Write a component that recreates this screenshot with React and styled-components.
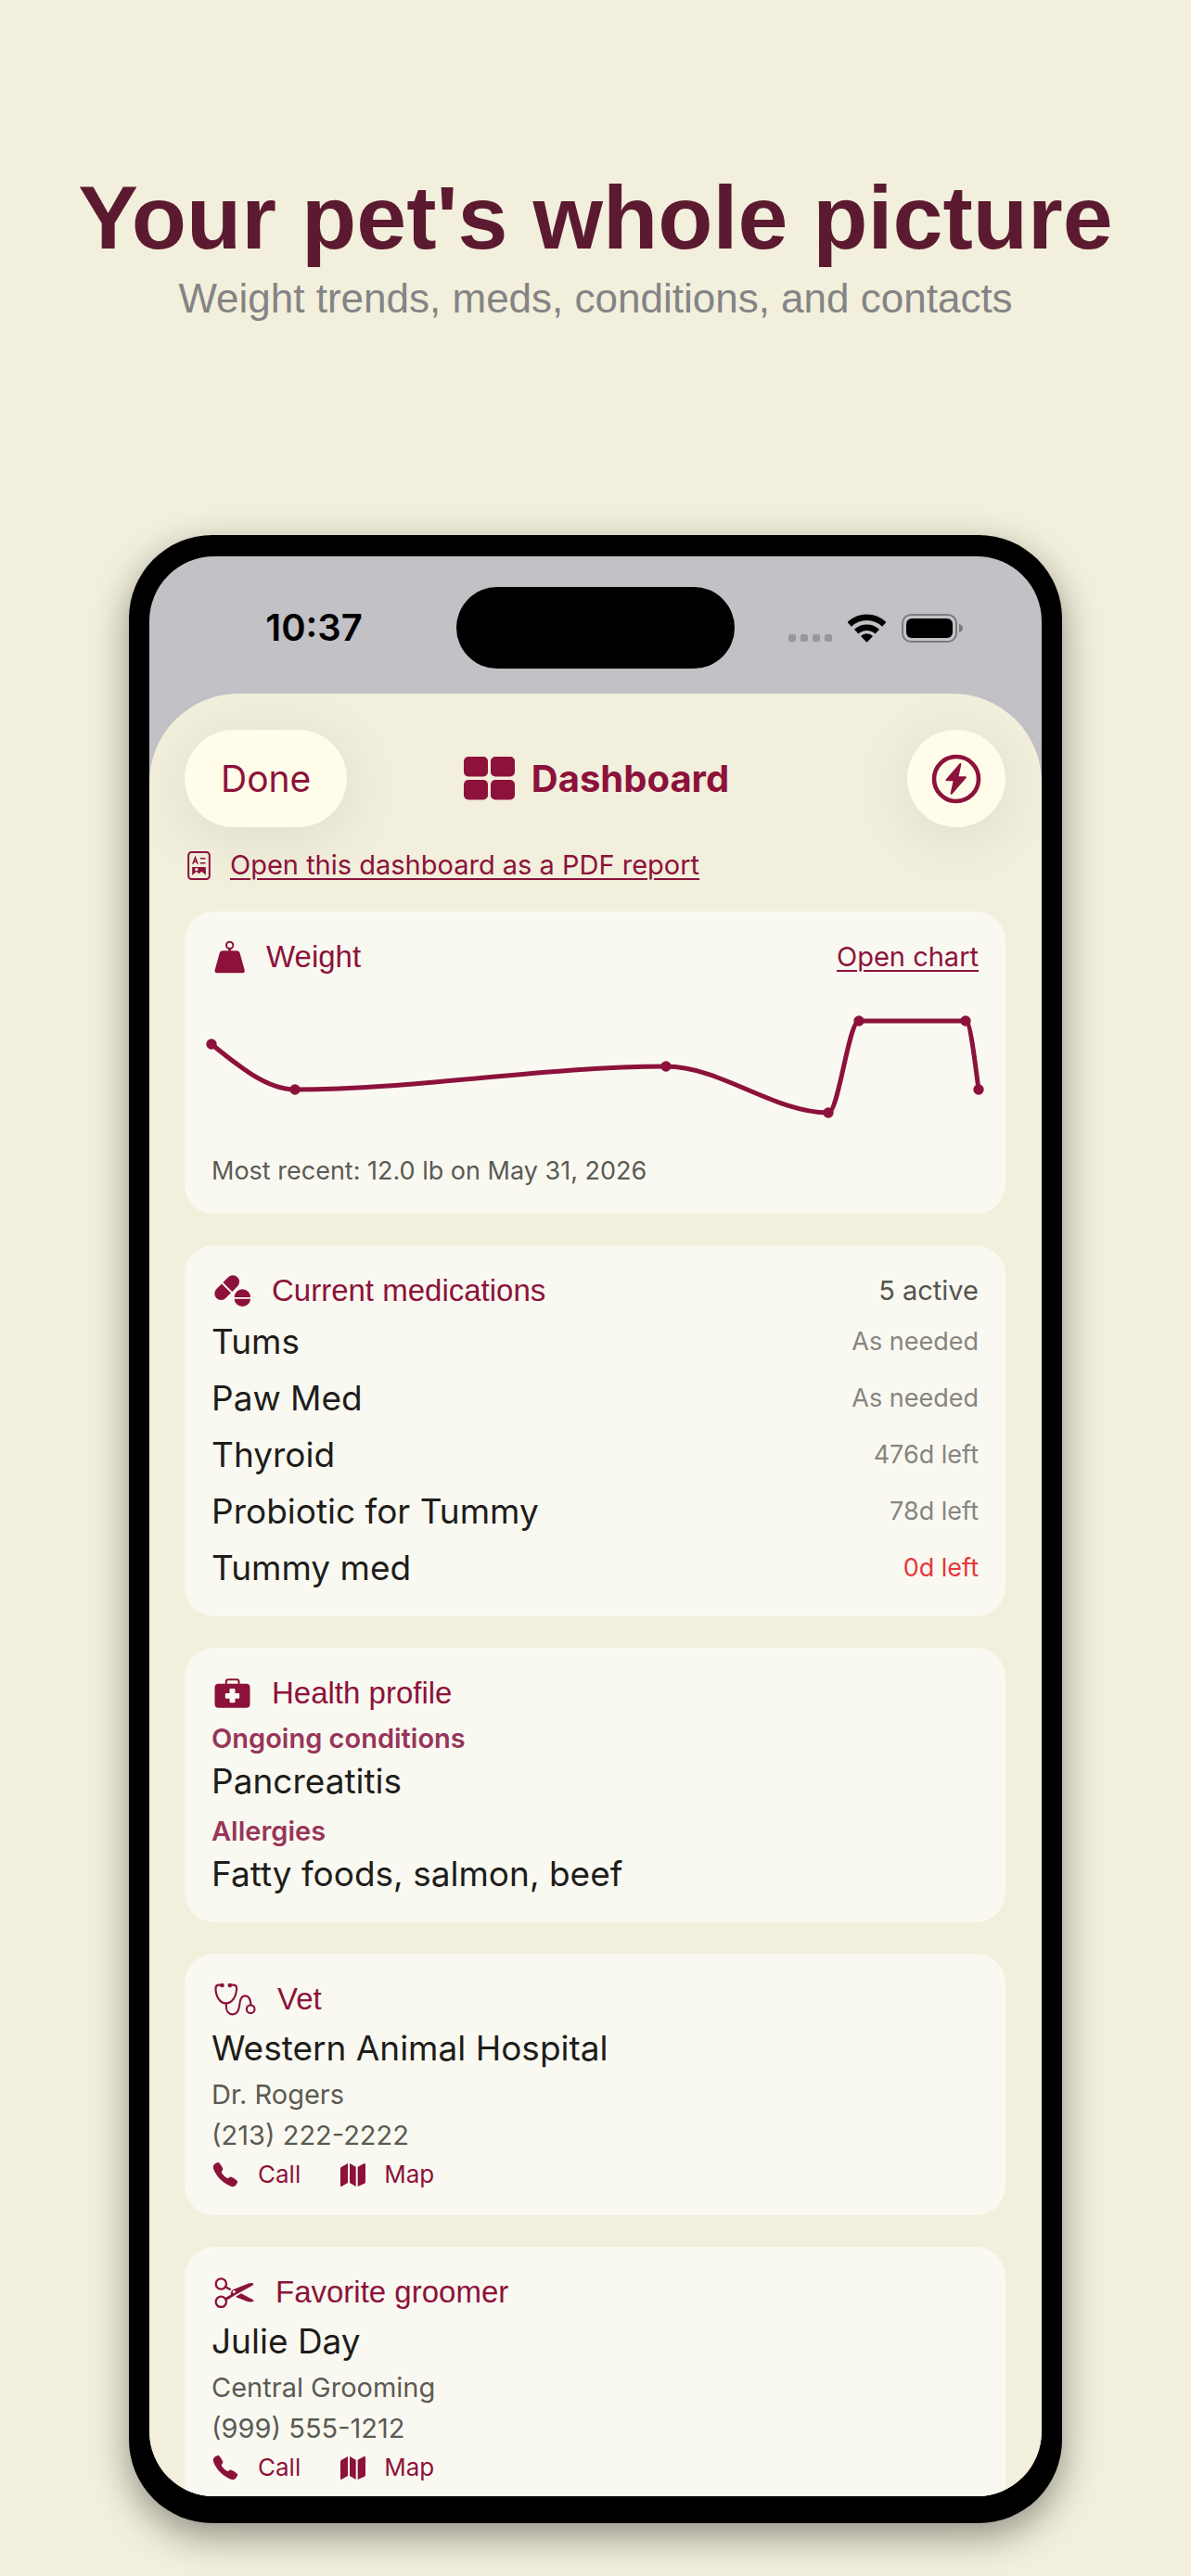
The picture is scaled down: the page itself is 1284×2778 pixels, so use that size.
import React from 'react'
import styled, { createGlobalStyle } from 'styled-components'
import { IoCall } from 'react-icons/io5'

const GlobalStyle = createGlobalStyle`
*{
    box-sizing: border-box;
}
body{
    margin: 0;
    background: #F2EFDC;
    font-family: Inter, "Liberation Sans", sans-serif;
}
h1, h2, h3, p, ul{
    margin: 0;
    padding: 0;
}
svg{
    display: block;
    flex: none;
}
`
const Page = styled.main`
display: flex;
min-height: 100vh;
padding: 180px 0px 57px;
flex-direction: column;
align-items: center;
`
const Headline = styled.h1`
color: #5C1A30;
text-align: center;
font-family: "Liberation Sans", Arial, sans-serif;
font-size: 97px;
font-weight: 700;
line-height: 110px;
`
const Tagline = styled.p`
margin-top: 6px;
color: #848484;
text-align: center;
font-family: "Liberation Sans", Arial, sans-serif;
font-size: 44px;
line-height: 52px;
`
const Phone = styled.div`
width: min(1006px, 92%);
margin-top: 229px;
padding: 23px 22px 29px;
border-radius: 90px;
background: #000;
box-shadow: 0 14px 40px rgba(0, 0, 0, 0.4);
`
const Screen = styled.div`
overflow: hidden;
border-radius: 70px;
background: #C2C1C6;
`
const StatusBar = styled.div`
display: grid;
grid-template-columns: 1fr 300px 1fr;
align-items: center;
height: 148px;
padding-top: 6px;
`
const Time = styled.time`
justify-self: center;
padding-left: 24px;
color: #000;
font-size: 40px;
font-weight: 600;
line-height: 48px;
`
const Island = styled.div`
height: 88px;
border-radius: 44px;
background: #000;
`
const Signals = styled.div`
display: flex;
padding-left: 58px;
align-items: center;
gap: 17px;
`
const Sheet = styled.section`
display: flex;
padding: 39px 39px 0px 38px;
flex-direction: column;
border-radius: 96px 96px 0px 0px;
background: #F2EFDC;
`
const Header = styled.header`
display: grid;
grid-template-columns: 1fr auto 1fr;
align-items: center;
margin-bottom: 23px;
`
const HeaderButton = styled.button`
display: flex;
height: 105px;
padding: 0px ${(props) => (props.$round ? '26px' : '39px')};
justify-content: center;
align-items: center;
justify-self: ${(props) => (props.$round ? 'end' : 'start')};
border: none;
border-radius: 53px;
background: #FFFCE9;
box-shadow: 0 10px 70px rgba(0, 0, 0, 0.09);
color: #8C123B;
font-family: inherit;
font-size: 39px;
cursor: pointer;
`
const ScreenTitle = styled.h2`
display: flex;
padding-left: 3px;
align-items: center;
gap: 18px;
color: #8C123B;
font-size: 40px;
font-weight: 700;
line-height: 48px;
`
const ReportRow = styled.div`
display: flex;
padding-left: 3px;
align-items: center;
gap: 21px;
margin-bottom: 32px;
color: #8C123B;
`
const TextLink = styled.a`
color: #8C123B;
font-size: 29px;
line-height: 36px;
text-decoration: underline;
text-decoration-thickness: 2px;
text-underline-offset: 4px;
`
const Cards = styled.div`
display: flex;
flex-direction: column;
gap: 34px;
`
const Card = styled.article`
display: flex;
padding: 28px 29px ${(props) => (props.$cut ? '15px' : '28px')};
flex-direction: column;
gap: ${(props) => props.$gap || '10px'};
border-radius: ${(props) => (props.$cut ? '32px 32px 0px 0px' : '32px')};
background: #FAF9F1;
`
const CardHead = styled.div`
display: flex;
justify-content: space-between;
align-items: center;
`
const CardTitle = styled.h3`
display: flex;
padding-left: 3px;
align-items: center;
gap: 23px;
color: #8C123B;
font-family: "Liberation Sans", Arial, sans-serif;
font-size: 33px;
font-weight: 400;
line-height: 42px;
`
const Count = styled.span`
color: #55544F;
font-size: 29px;
line-height: 36px;
`
const Chart = styled.svg`
width: 100%;
height: auto;
overflow: visible;
`
const Caption = styled.p`
color: #5B5A55;
font-size: 27px;
line-height: 36px;
`
const MedList = styled.ul`
display: flex;
flex-direction: column;
gap: 13px;
list-style: none;
`
const MedRow = styled.li`
display: flex;
justify-content: space-between;
align-items: center;
`
const Body = styled.p`
color: #1E1D1B;
font-size: 37px;
line-height: 48px;
`
const Supply = styled.span`
color: ${(props) => (props.$low ? '#E5383B' : '#868580')};
font-size: 27px;
line-height: 32px;
`
const Conditions = styled.div`
display: flex;
flex-direction: column;
gap: 12px;
`
const Condition = styled.div`
display: flex;
flex-direction: column;
gap: 4px;
`
const Label = styled.p`
color: #97355A;
font-size: 29px;
font-weight: 600;
line-height: 36px;
`
const Detail = styled.p`
color: #5B5A55;
font-size: 29px;
line-height: 36px;
`
const Actions = styled.div`
display: flex;
gap: 43px;
`
const Action = styled.a`
display: flex;
align-items: center;
gap: 20px;
color: #8C123B;
font-size: 26px;
line-height: 32px;
text-decoration: none;
`

const weights = [
  [0, 63],
  [90, 112],
  [490, 87],
  [665, 137],
  [698, 38],
  [813, 38],
  [827, 112],
]

// monotone cubic through the points, flat wherever the trend turns
const linePath = (pts) => {
  const slopes = pts.slice(1).map((p, i) => (p[1] - pts[i][1]) / (p[0] - pts[i][0]))
  const last = slopes.length - 1
  const tangent = (i) => {
    if (i === 0) return slopes[0] * 1.5
    if (i > last) return slopes[last] * 1.5
    return slopes[i - 1] * slopes[i] <= 0 ? 0 : (slopes[i - 1] + slopes[i]) / 2
  }
  return pts.slice(1).reduce((d, p, i) => {
    const [x, y] = pts[i]
    const dx = (p[0] - x) / 3
    return `${d} C${x + dx} ${y + dx * tangent(i)} ${p[0] - dx} ${p[1] - dx * tangent(i + 1)} ${p[0]} ${p[1]}`
  }, `M${pts[0][0]} ${pts[0][1]}`)
}

const meds = [
  { name: 'Tums', left: 'As needed' },
  { name: 'Paw Med', left: 'As needed' },
  { name: 'Thyroid', left: '476d left' },
  { name: 'Probiotic for Tummy', left: '78d left' },
  { name: 'Tummy med', left: '0d left', low: true },
]

const DotsIcon = () => (
  <svg width="47" height="31" viewBox="0 0 47 31" fill="#97969B" aria-hidden="true">
    <rect x="0" y="22" width="8" height="8" rx="2" />
    <rect x="13" y="22" width="8" height="8" rx="2" />
    <rect x="26" y="22" width="8" height="8" rx="2" />
    <rect x="39" y="22" width="8" height="8" rx="2" />
  </svg>
)
const WifiIcon = () => (
  <svg width="41" height="31" viewBox="0 0 41 31" fill="none" stroke="#000" strokeWidth="6.5" aria-hidden="true">
    <path d="M1.7 11.3 A27 27 0 0 1 39.3 11.3" />
    <path d="M9.2 19.2 A16.5 16.5 0 0 1 31.8 19.2" />
    <path d="M20.5 30.8 L13.9 24 A9.5 9.5 0 0 1 27.1 24 Z" fill="#000" stroke="none" />
  </svg>
)
const BatteryIcon = () => (
  <svg width="66" height="31" viewBox="0 0 66 31" aria-hidden="true">
    <rect x="1" y="1" width="58" height="29" rx="9" fill="none" stroke="#7B7A7F" strokeWidth="2" />
    <rect x="5" y="5" width="50" height="21" rx="6" fill="#000" />
    <path d="M62 11 q4 1 4 4.5 q0 3.5 -4 4.5z" fill="#7B7A7F" />
  </svg>
)
const GridIcon = () => (
  <svg width="55" height="47" viewBox="0 0 55 47" fill="currentColor" aria-hidden="true">
    <rect x="0" y="0" width="26" height="21.5" rx="5" />
    <rect x="29" y="0" width="26" height="21.5" rx="5" />
    <rect x="0" y="25" width="26" height="21.5" rx="5" />
    <rect x="29" y="25" width="26" height="21.5" rx="5" />
  </svg>
)
const BoltIcon = () => (
  <svg width="54" height="54" viewBox="0 0 54 54" aria-hidden="true">
    <circle cx="27" cy="27" r="24" fill="none" stroke="currentColor" strokeWidth="4.6" />
    <path
      d="M31.4 11 L16.5 28.2 H24.8 L21.6 42.8 L36.8 25.3 H28.3 Z"
      fill="currentColor"
      stroke="currentColor"
      strokeWidth="2"
      strokeLinejoin="round"
    />
  </svg>
)
const ReportIcon = () => (
  <svg width="25" height="31" viewBox="0 0 74 93" fill="none" stroke="currentColor" strokeWidth="6" aria-hidden="true">
    <rect x="3" y="3" width="68" height="87" rx="10" />
    <path d="M17 41 L25 20 L33 41 M20 34 H30" strokeWidth="4.5" />
    <path d="M41 23 H58 M41 38 H58" strokeWidth="4.5" />
    <path
      d="M15 51 H59 V77 L46 65 L37 73 L29 66 L15 77 Z M29 54 a5 5 0 1 0 .1 0z"
      fill="currentColor"
      fillRule="evenodd"
      stroke="none"
    />
  </svg>
)
const WeightIcon = () => (
  <svg width="33" height="36" viewBox="3 4 99 108" fill="currentColor" aria-hidden="true">
    <circle cx="53" cy="20" r="11" fill="none" stroke="currentColor" strokeWidth="6" />
    <path d="M49 30 H57 V42 H49z" />
    <path d="M31 38 H75 q9 0 11 8 l15 54 q2 10 -8 10 H13 q-10 0 -8 -10 l15 -54 q2 -8 11 -8z" />
  </svg>
)
const PillsIcon = () => (
  <svg width="39" height="34" viewBox="4 4 117 102" fill="currentColor" aria-hidden="true">
    <g transform="rotate(-45 45 45)">
      <path d="M42 24 V66 H18 a21 21 0 0 1 0 -42z" />
      <path d="M48 24 V66 H72 a21 21 0 0 0 0 -42z" />
    </g>
    <path d="M69 76 a26 26 0 0 1 52 0z" />
    <path d="M69 81 a26 25 0 0 0 52 0z" />
  </svg>
)
const MedkitIcon = () => (
  <svg width="39" height="32" viewBox="4 6 116 96" aria-hidden="true">
    <path d="M42 25 V17 q0 -7 7 -7 H76 q7 0 7 7 V25" fill="none" stroke="currentColor" strokeWidth="6" />
    <rect x="5" y="23" width="114" height="78" rx="12" fill="currentColor" />
    <rect x="39" y="54" width="46" height="17" rx="3" fill="#FAF9F1" />
    <rect x="53" y="39" width="18" height="46" rx="3" fill="#FAF9F1" />
  </svg>
)
const StethoscopeIcon = () => (
  <svg width="45" height="36" viewBox="4 2 134 108" fill="none" stroke="currentColor" strokeWidth="6.5" aria-hidden="true">
    <path d="M28 10 H18 q-10 0 -10 11 c0 26 14 48 33 48 c20 0 34 -22 35 -48 q0 -11 -11 -11 H55" />
    <path d="M42 69 V78 c0 16 8 27 21 27 c16 0 20 -14 22 -29 c2 -18 5 -31 19 -31 c14 0 17 14 18 29" />
    <circle cx="121" cy="88" r="13" />
    <circle cx="29" cy="11" r="7" fill="currentColor" stroke="none" />
    <circle cx="54" cy="11" r="7" fill="currentColor" stroke="none" />
  </svg>
)
const ScissorsIcon = () => (
  <svg width="43" height="33" viewBox="3 1 129 99" fill="currentColor" aria-hidden="true">
    <circle cx="25" cy="22" r="17" fill="none" stroke="currentColor" strokeWidth="7" />
    <circle cx="25" cy="80" r="17" fill="none" stroke="currentColor" strokeWidth="7" />
    <path d="M38 31 L56 41" stroke="currentColor" strokeWidth="7" />
    <path
      fillRule="evenodd"
      d="M37 68 L56 57 q0 -14 9 -17 L116 20 q10 -3 14 1 q1 4 -5 7 L72 57 L42 76z M67 43 a4.5 4.5 0 1 0 .1 0z"
    />
    <path d="M72 64 L90 53 L128 73 q5 4 0 6 q-8 3 -20 -1z" />
  </svg>
)
const MapIcon = () => (
  <svg width="27" height="25" viewBox="0 0 81 75" fill="currentColor" aria-hidden="true">
    <path d="M4 11 L24 0 V63 L3 75 q-3 0 -3 -4 V17 q0 -4 4 -6z" />
    <path d="M30 0 L50 11 V75 L30 63z" />
    <path d="M56 11 L77 0 q4 0 4 4 V60 q0 3 -3 5 L56 75z" />
  </svg>
)

const Contact = ({ icon, kind, name, detail, phone, cut }) => (
  <Card $gap="8px" $cut={cut}>
    <CardTitle>{icon}{kind}</CardTitle>
    <Body>{name}</Body>
    <Detail>{detail}</Detail>
    <Detail>{phone}</Detail>
    <Actions>
      <Action href={`tel:${phone}`}><IoCall size={30} />Call</Action>
      <Action href="#map"><MapIcon />Map</Action>
    </Actions>
  </Card>
)

const App = () => {
  return (
    <>
      <GlobalStyle />
      <Page>
        <Headline>Your pet's whole picture</Headline>
        <Tagline>Weight trends, meds, conditions, and contacts</Tagline>
        <Phone>
          <Screen>
            <StatusBar>
              <Time>10:37</Time>
              <Island />
              <Signals>
                <DotsIcon />
                <WifiIcon />
                <BatteryIcon />
              </Signals>
            </StatusBar>
            <Sheet>
              <Header>
                <HeaderButton type="button">Done</HeaderButton>
                <ScreenTitle><GridIcon />Dashboard</ScreenTitle>
                <HeaderButton type="button" $round aria-label="Quick actions"><BoltIcon /></HeaderButton>
              </Header>
              <ReportRow>
                <ReportIcon />
                <TextLink href="#report">Open this dashboard as a PDF report</TextLink>
              </ReportRow>
              <Cards>
                <Card>
                  <CardHead>
                    <CardTitle><WeightIcon />Weight</CardTitle>
                    <TextLink href="#chart">Open chart</TextLink>
                  </CardHead>
                  <Chart viewBox="0 0 827 172" role="img" aria-label="Weight over time">
                    <path d={linePath(weights)} fill="none" stroke="#8C123B" strokeWidth="5" />
                    {weights.map(([x, y]) => (
                      <circle key={x} cx={x} cy={y} r="5.7" fill="#8C123B" />
                    ))}
                  </Chart>
                  <Caption>Most recent: 12.0 lb on May 31, 2026</Caption>
                </Card>
                <Card>
                  <CardHead>
                    <CardTitle><PillsIcon />Current medications</CardTitle>
                    <Count>5 active</Count>
                  </CardHead>
                  <MedList>
                    {meds.map((med) => (
                      <MedRow key={med.name}>
                        <Body as="span">{med.name}</Body>
                        <Supply $low={med.low}>{med.left}</Supply>
                      </MedRow>
                    ))}
                  </MedList>
                </Card>
                <Card>
                  <CardTitle><MedkitIcon />Health profile</CardTitle>
                  <Conditions>
                    <Condition>
                      <Label>Ongoing conditions</Label>
                      <Body>Pancreatitis</Body>
                    </Condition>
                    <Condition>
                      <Label>Allergies</Label>
                      <Body>Fatty foods, salmon, beef</Body>
                    </Condition>
                  </Conditions>
                </Card>
                <Contact
                  icon={<StethoscopeIcon />}
                  kind="Vet"
                  name="Western Animal Hospital"
                  detail="Dr. Rogers"
                  phone="(213) 222-2222"
                />
                <Contact
                  icon={<ScissorsIcon />}
                  kind="Favorite groomer"
                  name="Julie Day"
                  detail="Central Grooming"
                  phone="(999) 555-1212"
                  cut
                />
              </Cards>
            </Sheet>
          </Screen>
        </Phone>
      </Page>
    </>
  )
}

export default App
